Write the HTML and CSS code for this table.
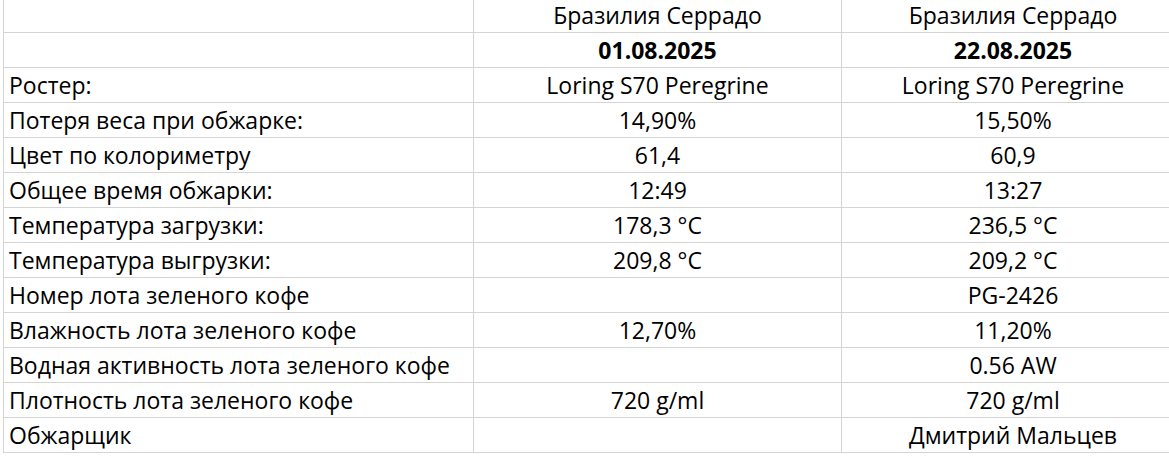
FILE: index.html
```html
<!DOCTYPE html>
<html lang="ru">
<head>
<meta charset="utf-8">
<title>Обжарка</title>
<link rel="stylesheet" href="styles.css">
</head>
<body>
<div class="sheet">
  <div class="cell"></div><div class="cell c">Бразилия Серрадо</div><div class="cell c">Бразилия Серрадо</div>
  <div class="cell"></div><div class="cell c b">01.08.2025</div><div class="cell c b">22.08.2025</div>
  <div class="cell">Ростер:</div><div class="cell c">Loring S70 Peregrine</div><div class="cell c">Loring S70 Peregrine</div>
  <div class="cell">Потеря веса при обжарке:</div><div class="cell c">14,90%</div><div class="cell c">15,50%</div>
  <div class="cell">Цвет по колориметру</div><div class="cell c">61,4</div><div class="cell c">60,9</div>
  <div class="cell">Общее время обжарки:</div><div class="cell c">12:49</div><div class="cell c">13:27</div>
  <div class="cell">Температура загрузки:</div><div class="cell c">178,3 °C</div><div class="cell c">236,5 °C</div>
  <div class="cell">Температура выгрузки:</div><div class="cell c">209,8 °C</div><div class="cell c">209,2 °C</div>
  <div class="cell">Номер лота зеленого кофе</div><div class="cell c"></div><div class="cell c">PG-2426</div>
  <div class="cell">Влажность лота зеленого кофе</div><div class="cell c">12,70%</div><div class="cell c">11,20%</div>
  <div class="cell">Водная активность лота зеленого кофе</div><div class="cell c"></div><div class="cell c">0.56 AW</div>
  <div class="cell">Плотность лота зеленого кофе</div><div class="cell c">720 g/ml</div><div class="cell c">720 g/ml</div>
  <div class="cell">Обжарщик</div><div class="cell c"></div><div class="cell c">Дмитрий Мальцев</div>
</div>
</body>
</html>
```
FILE: styles.css
```css
html, body {
  margin: 0;
  padding: 0;
  background: #ffffff;
  overflow: hidden;
}
body {
  width: 1169px;
  height: 457px;
}
.sheet {
  display: grid;
  grid-template-columns: 470px 368px 343px;
  grid-auto-rows: 35px;
  margin-left: 3px;
  margin-top: -2px;
  border-left: 1px solid #d4d4d4;
  width: max-content;
  font-family: "Open Sans", "Noto Sans", sans-serif;
  font-size: 23px;
  color: #000000;
}
.cell {
  border-right: 1px solid #d4d4d4;
  border-bottom: 1px solid #d4d4d4;
  line-height: 34px;
  padding: 0 5px;
  white-space: nowrap;
  overflow: hidden;
}
.c {
  text-align: center;
}
.b {
  font-weight: 700;
}
```
